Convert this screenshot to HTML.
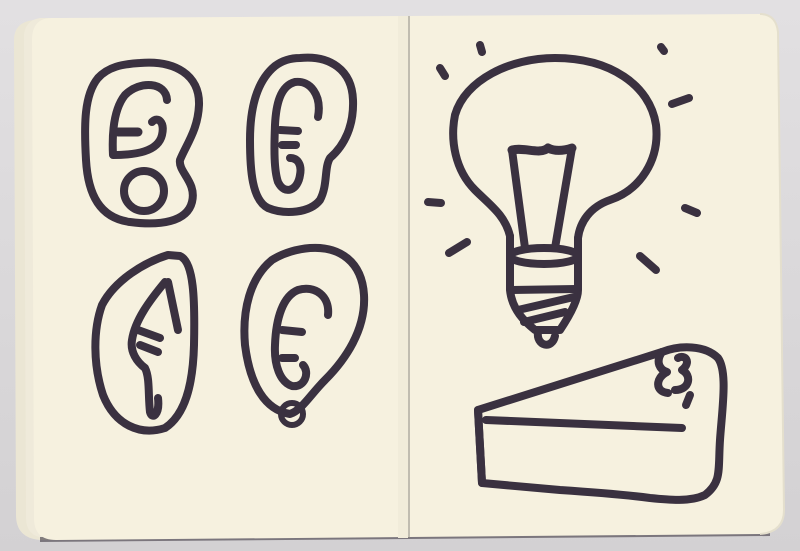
<!DOCTYPE html>
<html><head><meta charset="utf-8"><style>
html,body{margin:0;padding:0;width:800px;height:551px;overflow:hidden;background:#dcdadb;}
svg{display:block}
</style></head><body>
<svg width="800" height="551" viewBox="0 0 800 551" xmlns="http://www.w3.org/2000/svg">
<defs>
<linearGradient id="bg" x1="0" y1="0" x2="0" y2="1"><stop offset="0" stop-color="#e2e0e2"/><stop offset="1" stop-color="#d3d1d3"/></linearGradient>
</defs>
<rect width="800" height="551" fill="url(#bg)"/>
<path d="M14,40 Q14,22 34,20 L60,20 L60,540 L40,540 Q16,538 16,515 Z" fill="#ebe6d4"/>
<path d="M24,34 Q26,20 40,18 L60,18 L60,538 L44,538 Q26,536 26,518 Z" fill="#efeada"/>
<path d="M40,537 L770,532 L770,536 L40,542 Z" fill="#555058" opacity="0.7"/>
<path d="M52,18 L760,14 Q776,14 778,32 L784,510 Q784,532 760,534 L56,540 Q34,540 34,518 L32,40 Q32,18 52,18 Z" fill="#f6f1df"/>
<path d="M760,14 Q776,14 778,32 L784,510 Q784,532 760,534" fill="none" stroke="#e4dfcd" stroke-width="2"/>
<rect x="398" y="16" width="10" height="522" fill="#f1ecda"/>
<line x1="409" y1="16" x2="409" y2="538" stroke="#8a8680" stroke-width="1"/>

<g fill="none" stroke="#3a3140" stroke-width="8" stroke-linecap="round" stroke-linejoin="round">
<path d="M140,63 C175,60 200,75 199,105 C198,130 186,145 180,160 C178,172 197,182 192,202 C187,222 160,226 130,222 C100,218 88,195 86,160 C84,125 84,95 98,78 C108,67 122,64 140,63 Z"/>
<path d="M167,100 C166,82 140,80 125,95 C113,110 112,135 113,155 C135,155 158,152 162,135 C165,122 158,116 152,122"/>
<path d="M118,132 L138,132" stroke-width="9"/>
<circle cx="144" cy="191" r="20"/>
<path d="M300,58 C330,55 352,70 353,100 C354,125 345,145 330,158 C324,168 328,185 320,200 C310,213 285,215 268,208 C252,200 250,170 250,140 C250,105 258,80 275,66 C283,60 292,58 300,58 Z"/>
<path d="M318,117 C322,95 310,80 295,82 C280,86 276,105 275,125 C274,150 274,170 278,182 C285,196 298,190 300,175 C302,165 298,158 290,158"/>
<path d="M280,130 L298,131 M282,145 L296,145"/>
<path d="M180,256 C194,262 195,300 194,345 C193,385 185,415 165,428 C140,436 115,425 103,395 C93,365 93,330 102,305 C115,280 145,262 168,255 Z"/>
<path d="M168,282 L178,330"/>
<path d="M165,282 C150,300 135,320 132,340 C130,352 137,362 145,368 C150,378 148,395 150,412 C152,420 160,415 158,398"/>
<path d="M138,330 L160,338 M140,345 L158,352"/>
<path d="M310,248 C340,246 362,262 364,295 C366,330 345,360 325,380 C310,395 302,410 290,414 C265,410 250,385 245,345 C242,310 250,278 272,260 C285,252 298,249 310,248 Z"/>
<path d="M328,315 C330,296 315,285 298,290 C283,296 276,318 275,345 C274,365 280,382 292,386 C305,388 310,372 303,365"/>
<path d="M282,330 L302,332 M282,358 L295,358"/>
<circle cx="292" cy="414" r="11" stroke-width="6"/>

<path d="M480,45 L482,52 M440,68 L445,76 M661,47 L664,51 M672,104 L689,98 M428,202 L441,203 M685,208 L697,213 M449,253 L467,242 M640,256 L656,270"/>
<path d="M510,236 C505,215 490,205 475,190 C455,170 450,140 455,115 C465,80 510,58 555,58 C610,58 650,85 656,125 C660,160 640,190 610,200 C590,207 580,222 578,238"/>
<path d="M510,236 L510,290 C512,310 525,322 535,330 L560,330 C570,315 578,300 578,290 L578,238"/>
<ellipse cx="544" cy="256" rx="34" ry="8"/>
<path d="M512,290 L576,289 M518,310 L574,297 M524,322 L565,312"/>
<path d="M538,332 C536,346 552,350 555,336"/>
<path d="M512,150 L525,248 M572,148 L555,248"/>
<path d="M512,150 C525,147 540,155 548,148 C556,152 566,150 572,148" stroke-width="9"/>
<path d="M478,410 L662,352 C680,345 705,345 718,358 C728,372 722,410 720,440 C718,470 722,482 705,495 C690,502 670,500 650,498 C620,494 590,492 560,490 L482,483 Z"/>
<path d="M478,410 L482,483"/>
<path d="M486,420 L682,428"/>
<path d="M662,352 C655,362 660,370 667,372 C655,378 655,392 668,393 M675,390 C690,390 692,375 682,370 C692,362 685,354 678,358"/>
<path d="M690,395 L686,405"/>
</g>
</svg>
</body></html>
